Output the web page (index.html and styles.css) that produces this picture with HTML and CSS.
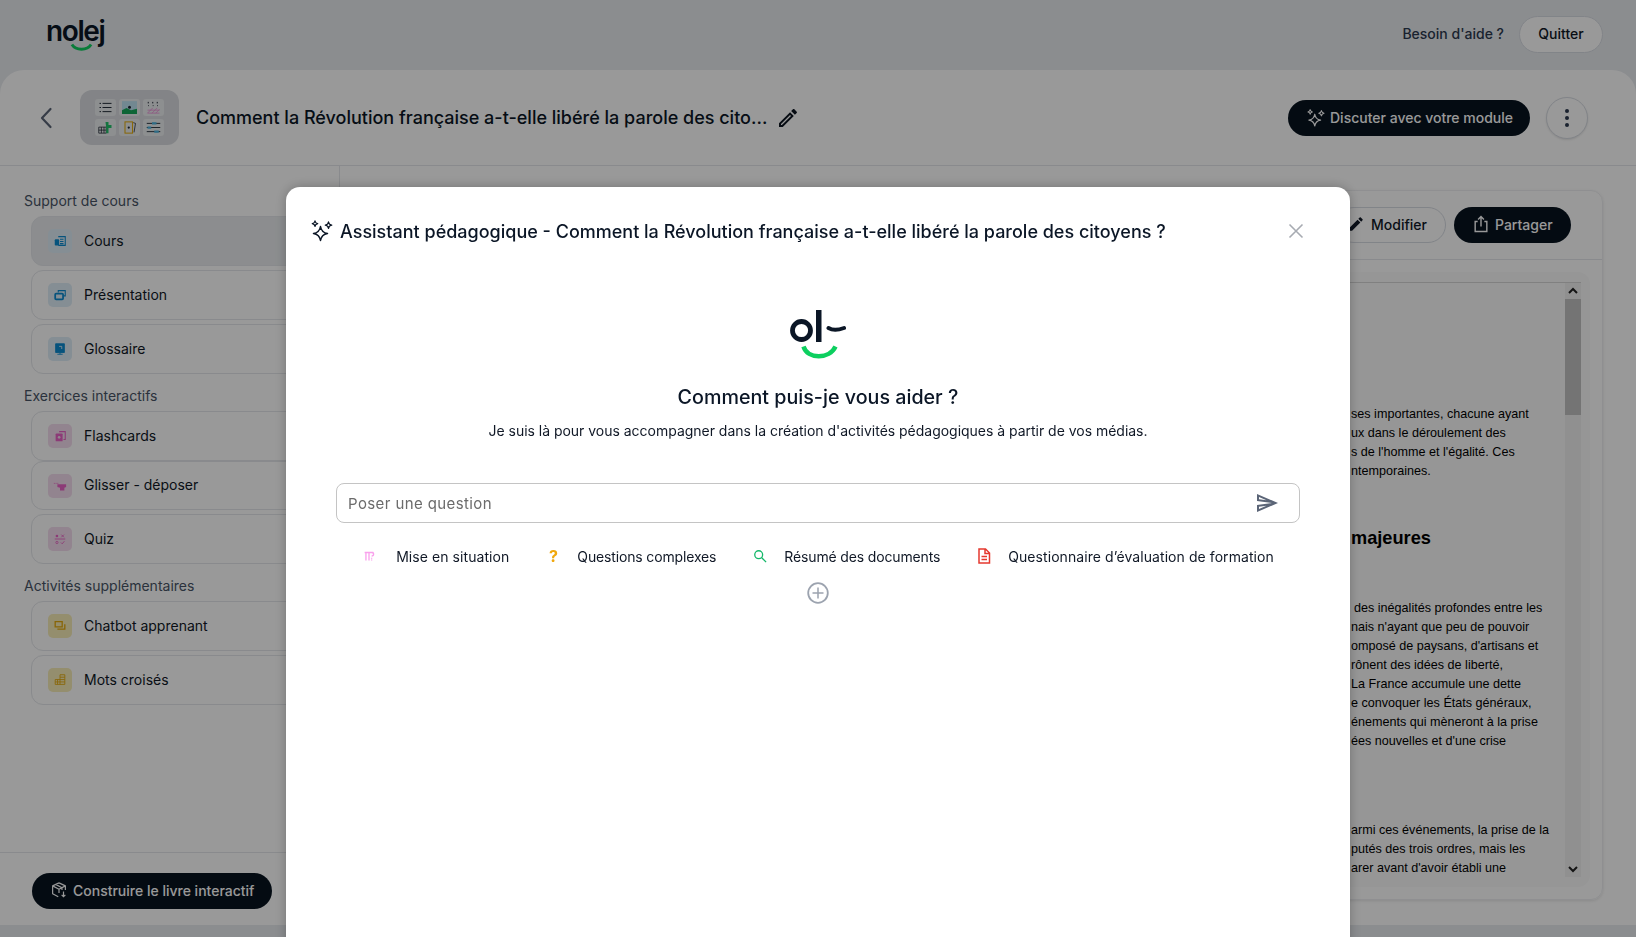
FILE: index.html
```html
<!DOCTYPE html>
<html lang="fr">
<head>
    <meta charset="UTF-8">
    <title>Nolej</title>
    <link rel="stylesheet" href="styles.css">
</head>
<body>
    <svg class="defs" width="0" height="0">
        <symbol id="sparkle" viewBox="0 0 24 24">
            <path d="M10.500 7.500C11.200 12 13 13.800 17.500 14.500 13 15.200 11.200 17 10.500 21.500 9.800 17 8 15.200 3.500 14.500 8 13.800 9.800 12 10.500 7.500Z" fill="none" stroke="currentColor" stroke-width="1.500" stroke-linejoin="round"/>
            <path d="M5 2C5.300 3.700 6 4.400 7.700 4.700 6 5 5.300 5.700 5 7.400 4.700 5.700 4 5 2.300 4.700 4 4.400 4.700 3.700 5 2Z" fill="none" stroke="currentColor" stroke-width="1.300" stroke-linejoin="round"/>
            <path d="M18.500 3C18.800 5 19.700 5.900 21.700 6.200 19.700 6.500 18.800 7.400 18.500 9.400 18.200 7.400 17.300 6.500 15.300 6.200 17.300 5.900 18.200 5 18.500 3Z" fill="none" stroke="currentColor" stroke-width="1.300" stroke-linejoin="round"/>
        </symbol>
    </svg>

    <div class="topbar">
        <div class="logo">
            <span class="logo-text">nolej</span>
            <svg class="logo-smile" viewBox="0 0 24 8"><path d="M2 1.500C6 8 18 8 22 1.500" fill="none" stroke="#10cf60" stroke-width="3"/></svg>
        </div>
        <div class="topbar-right">
            <span class="help">Besoin d'aide ?</span>
            <button class="btn-outline btn-quit">Quitter</button>
        </div>
    </div>

    <div class="card">
        <div class="card-header">
            <svg class="back" viewBox="0 0 14 22"><path d="M11.500 2 3 11l8.500 9" fill="none" stroke="#5b6577" stroke-width="2.200" stroke-linecap="round" stroke-linejoin="round"/></svg>
            <div class="thumb">
                <span class="thumb-tile"><svg viewBox="0 0 20 17"><path d="M2 3h2M6 3h12M2 8.500h2M6 8.500h12M2 14h2M6 14h12" stroke="#1d2733" stroke-width="1.300"/></svg></span>
                <span class="thumb-tile"><svg viewBox="0 0 20 17"><rect x="0" y="0" width="20" height="17" fill="#bfe3f2"/><path d="M0 17v-5l6-3 6 3 8-2v7z" fill="#17a85a"/><circle cx="10" cy="8" r="2" fill="#1d2733"/></svg></span>
                <span class="thumb-tile"><svg viewBox="0 0 20 17"><path d="M3 1v2M9 1v2M15 1v2M3 6h1M9 6h1M15 6h1" stroke="#1d2733" stroke-width="1.300"/><path d="M2 16 9 9M8 16l7-7M13 16l5-5M2 12h16M2 16h16" stroke="#ee8ad6" stroke-width="1"/></svg></span>
                <span class="thumb-tile"><svg viewBox="0 0 20 17"><path d="M1 8h10v8H1zM4.500 8v8M8 8v8M1 12h10" fill="none" stroke="#1d2733" stroke-width="1"/><path d="M10 1h4v4h4v4h-4v7h-3v-7" fill="#23c46c"/></svg></span>
                <span class="thumb-tile"><svg viewBox="0 0 20 17"><rect x="4" y="1" width="10" height="15" fill="none" stroke="#e3ad10" stroke-width="1.400"/><path d="M15 2l3 1-2 12" fill="none" stroke="#1d2733"/><circle cx="9" cy="8.500" r="1.500" fill="#1d2733"/></svg></span>
                <span class="thumb-tile"><svg viewBox="0 0 20 17"><path d="M1 3h18M1 8.500h18M1 14h18" stroke="#1d2733" stroke-width="1.200"/><path d="M8 1.500h6v3H8zM2 7h5v3H2zM11 12.500h6v3h-6z" fill="#4db4df"/></svg></span>
            </div>
            <h1 class="title">Comment la Révolution française a-t-elle libéré la parole des cito...</h1>
            <svg class="title-edit" viewBox="0 0 24 24"><path fill="#0d1520" d="M14.060 9l.940.940L5.920 19H5v-.920L14.060 9m3.600-6c-.250 0-.510.100-.700.290l-1.830 1.830 3.750 3.750 1.830-1.830c.390-.390.390-1.040 0-1.410l-2.340-2.340c-.200-.200-.450-.290-.710-.290m-3.600 3.190L3 17.250V21h3.750L17.810 9.940l-3.750-3.750z"/></svg>
            <button class="btn-dark btn-chat"><svg class="ico-20"><use href="#sparkle"/></svg>Discuter avec votre module</button>
            <button class="btn-more"><span></span><span></span><span></span></button>
        </div>

        <div class="main">
            <div class="sidebar">
                <div class="nav">
                    <div class="nav-label">Support de cours</div>
                    <div class="nav-list">
                        <div class="nav-item active">
                            <span class="tile blue"><svg viewBox="0 0 16 16"><path d="M6 3h8v10H6M8 6h4M8 8.500h4M8 11h4" fill="none" stroke="currentColor" stroke-width="1.200"/><rect x="2" y="6" width="5" height="7" rx="1" fill="currentColor"/></svg></span>
                            Cours
                        </div>
                        <div class="nav-item">
                            <span class="tile blue"><svg viewBox="0 0 16 16"><path d="M6 5V3h8v6h-2" fill="none" stroke="currentColor" stroke-width="1.200"/><rect x="2.500" y="6.500" width="9" height="6.500" rx="1" fill="none" stroke="currentColor" stroke-width="2"/></svg></span>
                            Présentation
                        </div>
                        <div class="nav-item">
                            <span class="tile blue"><svg viewBox="0 0 16 16"><path d="M3 2h10v10H3zM8 12v2M5 14h6" fill="currentColor" stroke="currentColor"/><path d="M7 5h3v3" fill="none" stroke="#deedf7"/></svg></span>
                            Glossaire
                        </div>
                    </div>
                </div>

                <div class="nav">
                    <div class="nav-label">Exercices interactifs</div>
                    <div class="nav-list">
                        <div class="nav-item joined">
                            <span class="tile pink"><svg viewBox="0 0 16 16"><path d="M7 3h7v9h-2" fill="none" stroke="currentColor" stroke-width="1.200"/><rect x="3" y="5" width="8" height="9" rx="1" fill="currentColor"/><circle cx="7" cy="9.500" r="1.500" fill="#f4dcee"/></svg></span>
                            Flashcards
                        </div>
                        <div class="nav-item short">
                            <span class="tile pink"><svg viewBox="0 0 16 16"><path d="M1 5h5" stroke="currentColor" stroke-dasharray="1 1"/><path d="M5 6h10v3l-2 1v3H8v-3L5 9z" fill="currentColor"/></svg></span>
                            Glisser - déposer
                        </div>
                        <div class="nav-item">
                            <span class="tile pink"><svg viewBox="0 0 16 16"><path d="M2 8h12" stroke="currentColor"/><path d="M9.500 3l3 3M12.500 3l-3 3M9 12l1.500 1.500L13 10.500" fill="none" stroke="currentColor"/><circle cx="4.500" cy="4.500" r="1.500" fill="currentColor"/><circle cx="4.500" cy="12" r="1.300" fill="none" stroke="currentColor"/></svg></span>
                            Quiz
                        </div>
                    </div>
                </div>

                <div class="nav">
                    <div class="nav-label">Activités supplémentaires</div>
                    <div class="nav-list">
                        <div class="nav-item">
                            <span class="tile yellow"><svg viewBox="0 0 16 16"><path d="M2.500 3h8v6h-8zM5 11.500h8.500V6" fill="none" stroke="currentColor" stroke-width="1.500"/></svg></span>
                            Chatbot apprenant
                        </div>
                        <div class="nav-item">
                            <span class="tile yellow"><svg viewBox="0 0 16 16"><path d="M8 2h5.500v11H8zM2.500 7.500H13.500M2.500 7.500V13H8M5.200 7.500V13M8 4.800h5.500M2.500 10.200h11" fill="none" stroke="currentColor" stroke-width="1"/></svg></span>
                            Mots croisés
                        </div>
                    </div>
                </div>

                <div class="sidebar-footer">
                    <button class="btn-dark btn-book">
                        <svg class="ico-18" viewBox="0 0 24 24"><path d="M12 2.500 3.500 6.500v10.500L11 21M12 2.500l8.500 4V12M3.500 6.500 12 11l8.500-4.500M12 11v5M7.500 4.500l8.500 4.500v3" fill="none" stroke="currentColor" stroke-width="1.600" stroke-linejoin="round"/><path d="M18 14v7M15.500 18.500 18 21l2.500-2.500" fill="none" stroke="currentColor" stroke-width="1.600"/></svg>
                        Construire le livre interactif
                    </button>
                </div>
            </div>

            <div class="content">
                <div class="panel">
                    <div class="panel-header">
                        <button class="btn-outline btn-edit"><svg class="ico-18" viewBox="0 0 24 24"><path fill="currentColor" d="M20.710 7.040c.390-.390.390-1.040 0-1.410l-2.340-2.340c-.370-.390-1.020-.390-1.410 0l-1.840 1.830 3.750 3.750M3 17.250V21h3.750L17.810 9.930l-3.750-3.750L3 17.250z"/></svg>Modifier</button>
                        <button class="btn-dark btn-share"><svg class="ico-20" viewBox="0 0 24 24"><path d="M8 9H5v12h14V9h-3M12 15V3M8.500 6.500 12 3l3.500 3.500" fill="none" stroke="currentColor" stroke-width="1.700"/></svg>Partager</button>
                    </div>
                    <div class="panel-body">
                        <div class="doc">
                            <div class="doc-text">
                                <p class="doc-first">ses importantes, chacune ayant<br>ux dans le déroulement des<br>s de l'homme et l'égalité. Ces<br>ntemporaines.</p>
                                <h2 class="doc-heading">majeures</h2>
                                <p class="doc-second"><span class="doc-nudge">des inégalités profondes entre les</span><br>nais n'ayant que peu de pouvoir<br>omposé de paysans, d'artisans et<br>rônent des idées de liberté,<br>La France accumule une dette<br>e convoquer les États généraux,<br>énements qui mèneront à la prise<br>ées nouvelles et d'une crise</p>
                                <p class="doc-third">armi ces événements, la prise de la<br>putés des trois ordres, mais les<br>arer avant d'avoir établi une</p>
                            </div>
                            <div class="scrollbar">
                                <svg class="scroll-arrow" viewBox="0 0 16 16"><path d="M4 10l4-4 4 4" fill="none" stroke="#222" stroke-width="2"/></svg>
                                <div class="scroll-thumb"></div>
                                <svg class="scroll-arrow scroll-down" viewBox="0 0 16 16"><path d="M4 6l4 4 4-4" fill="none" stroke="#222" stroke-width="2"/></svg>
                            </div>
                        </div>
                    </div>
                </div>
            </div>
        </div>
    </div>

    <div class="overlay"></div>

    <div class="modal">
        <div class="modal-header">
            <svg class="modal-spark"><use href="#sparkle"/></svg>
            <h2 class="modal-title">Assistant pédagogique - Comment la Révolution française a-t-elle libéré la parole des citoyens ?</h2>
            <svg class="modal-close" viewBox="0 0 16 16"><path d="M1.500 1.500l13 13M14.500 1.500l-13 13" stroke="#a7abb2" stroke-width="1.600"/></svg>
        </div>

        <svg class="bot-logo" viewBox="0 0 56 50">
            <circle cx="11.500" cy="20.500" r="9" fill="none" stroke="#0b1626" stroke-width="4.800"/>
            <rect x="26" y="0" width="5.500" height="32" fill="#0b1626"/>
            <path d="M38.500 18c4 2.500 8 2.800 15.500 0" fill="none" stroke="#0b1626" stroke-width="4" stroke-linecap="round"/>
            <path d="M13.500 36.500c4 13 26 13 32 0" fill="none" stroke="#0ccf5f" stroke-width="4.500"/>
        </svg>
        <h3 class="bot-title">Comment puis-je vous aider ?</h3>
        <p class="bot-sub">Je suis là pour vous accompagner dans la création d'activités pédagogiques à partir de vos médias.</p>

        <div class="ask">
            <span class="ask-text">Poser une question</span>
            <svg class="ask-send" viewBox="0 0 24 24"><path fill="#5b6577" d="M4.010 6.030l7.510 3.220-7.520-1 .010-2.220m7.500 8.720L4 17.970v-2.220l7.510-1M2.010 3L2 10l15 2-15 2 .010 7L23 12 2.010 3z"/></svg>
        </div>

        <div class="prompts">
            <div class="prompt">
                <svg class="prompt-ico prompt-ico-mise" viewBox="0 0 16 16"><path d="M3 4h10M4.500 4v9M8 4v9M11 4c3 0 3 4 0 4M11 10v1M11 12v1" fill="none" stroke="#f9a0ec" stroke-width="1.500"/></svg>
                <span>Mise en situation</span>
            </div>
            <div class="prompt tight">
                <span class="prompt-q">?</span>
                <span>Questions complexes</span>
            </div>
            <div class="prompt tight">
                <svg class="prompt-ico" viewBox="0 0 16 16"><circle cx="6.500" cy="6.500" r="4.500" fill="none" stroke="#15b86a" stroke-width="1.500"/><path d="M10 10l5 5" stroke="#15b86a" stroke-width="1.500"/></svg>
                <span>Résumé des documents</span>
            </div>
            <div class="prompt">
                <svg class="prompt-ico prompt-ico-doc" viewBox="0 0 16 16"><path d="M3 1h6.500L13.500 5v10H3zM9 1V5.500h4.500" fill="none" stroke="#e5392f" stroke-width="1.500"/><path d="M5.500 8.500h5.500M5.500 11.500h5.500" stroke="#e5392f" stroke-width="1.500"/></svg>
                <span>Questionnaire d’évaluation de formation</span>
            </div>
        </div>

        <svg class="more-prompts" viewBox="0 0 22 22"><circle cx="11" cy="11" r="9.800" fill="none" stroke="#9ca3af" stroke-width="1.800"/><path d="M11 5.500v11M5.500 11h11" stroke="#9ca3af" stroke-width="1.500"/></svg>
    </div>
</body>
</html>
```

FILE: styles.css
```css
* {
    box-sizing: border-box;
}

body {
    margin: 0;
    height: 937px;
    overflow: hidden;
    background-color: #e8ebef;
    font-family: 'Inter', sans-serif;
    color: #101826;
    font-size: 14px;
}

button {
    font-family: inherit;
    cursor: pointer;
}

h1, h2, h3, p {
    margin: 0;
}

.defs {
    position: absolute;
}

/* Top bar */
.topbar {
    height: 70px;
    display: flex;
    align-items: center;
    justify-content: space-between;
    padding: 0 33px 1px 46px;
}

.logo {
    position: relative;
    height: 34px;
    width: 58px;
    margin-top: -1px;
}

.logo-text {
    display: block;
    font-size: 28px;
    line-height: 28px;
    font-weight: 600;
    letter-spacing: -1.4px;
    color: #0b1626;
}

.logo-smile {
    position: absolute;
    left: 24px;
    top: 26px;
    width: 23px;
    height: 8px;
}

.topbar-right {
    display: flex;
    align-items: center;
    gap: 15px;
}

.help {
    font-weight: 500;
    color: #2c3a4f;
    margin-bottom: 3px;
}

.btn-outline {
    background: #ffffff;
    border: 1px solid #d8dce3;
    border-radius: 20px;
    color: #101826;
    font-size: 14px;
    font-weight: 500;
    display: flex;
    align-items: center;
    padding: 0 0 2px;
}

.btn-dark {
    background: #07131f;
    border: none;
    border-radius: 20px;
    color: #ffffff;
    font-size: 14px;
    font-weight: 500;
    display: flex;
    align-items: center;
    padding: 0 0 2px;
}

.btn-quit {
    width: 84px;
    height: 37px;
    justify-content: center;
}

/* Main card */
.card {
    height: 855px;
    background: #ffffff;
    border-radius: 24px 24px 0 0;
    display: flex;
    flex-direction: column;
}

.card-header {
    height: 96px;
    flex: none;
    display: flex;
    align-items: center;
    border-bottom: 1px solid #e5e7eb;
    padding: 0 48px 0 39px;
}

.back {
    width: 14px;
    height: 22px;
    flex: none;
}

.thumb {
    width: 99px;
    height: 55px;
    margin-left: 27px;
    background: #dadde1;
    border-radius: 12px;
    display: grid;
    grid-template-columns: repeat(3, 21px);
    grid-template-rows: repeat(2, 17px);
    gap: 3px;
    justify-content: center;
    align-content: center;
}

.thumb-tile {
    background: #eceef0;
    border-radius: 3px;
    display: block;
    padding: 2px 3px;
}

.thumb-tile svg {
    display: block;
    width: 100%;
    height: 100%;
}

.title {
    font-size: 18px;
    font-weight: 500;
    margin-left: 17px;
    white-space: nowrap;
    color: #0b1626;
}

.title-edit {
    width: 24px;
    height: 24px;
    margin-left: 9px;
}

.ico-18 {
    width: 18px;
    height: 18px;
    flex: none;
}

.ico-20 {
    width: 20px;
    height: 20px;
    flex: none;
}

.btn-chat {
    margin-left: auto;
    height: 36px;
    width: 242px;
    padding: 0 0 0 18px;
    gap: 4px;
    white-space: nowrap;
}

.btn-more {
    width: 42px;
    height: 42px;
    margin-left: 16px;
    border-radius: 50%;
    background: #ffffff;
    border: 1px solid #d8dce3;
    box-shadow: 0 1px 2px rgba(0, 0, 0, 0.1);
    display: flex;
    flex-direction: column;
    align-items: center;
    justify-content: center;
    gap: 3px;
}

.btn-more span {
    width: 4px;
    height: 4px;
    border-radius: 50%;
    background: #2c3a4f;
}

.main {
    flex: 1;
    display: flex;
    min-height: 0;
}

/* Sidebar */
.sidebar {
    width: 340px;
    flex: none;
    border-right: 1px solid #e5e7eb;
    padding-top: 25px;
    display: flex;
    flex-direction: column;
}

.nav {
    padding: 0 7px 12px 24px;
}

.nav-label {
    height: 20px;
    line-height: 20px;
    color: #485466;
    margin-bottom: 5px;
}

.nav-list {
    margin-left: 7px;
    display: flex;
    flex-direction: column;
    gap: 4px;
}

.nav-item {
    height: 50px;
    border: 1px solid #e5e7eb;
    border-radius: 12px;
    display: flex;
    align-items: center;
    padding: 0 0 2px 16px;
    gap: 12px;
    font-size: 14px;
    color: #101826;
}

.nav-item.active {
    background: #e9ecef;
}

.nav-item.joined {
    margin-bottom: -4px;
}

.nav-item.short {
    height: 49px;
}

.tile {
    width: 24px;
    height: 24px;
    margin-top: 2px;
    border-radius: 5px;
    display: flex;
    align-items: center;
    justify-content: center;
}

.tile svg {
    width: 14px;
    height: 14px;
}

.blue {
    background: #deedf7;
    color: #0a8ad0;
}

.pink {
    background: #f4dcee;
    color: #ea62c6;
}

.yellow {
    background: #f7edb8;
    color: #e3a90b;
}

.sidebar-footer {
    margin-top: auto;
    height: 73px;
    border-top: 1px solid #e5e7eb;
    padding: 20px 0 0 32px;
}

.btn-book {
    width: 240px;
    height: 36px;
    padding-left: 18px;
    gap: 5px;
    white-space: nowrap;
}

/* Right panel */
.content {
    flex: 1;
    padding: 24px 33px 25px 24px;
    min-width: 0;
}

.panel {
    height: 100%;
    border: 1px solid #eeeff2;
    border-radius: 12px;
    box-shadow: 0 1px 3px rgba(0, 0, 0, 0.1);
    display: flex;
    flex-direction: column;
}

.panel-header {
    height: 69px;
    flex: none;
    display: flex;
    align-items: center;
    justify-content: flex-end;
    gap: 8px;
    padding-right: 31px;
    border-bottom: 1px solid #e5e7eb;
}

.btn-edit {
    width: 110px;
    height: 36px;
    justify-content: flex-end;
    gap: 6px;
    padding-right: 18px;
}

.btn-share {
    width: 117px;
    height: 36px;
    gap: 4px;
    padding-left: 17px;
}

.panel-body {
    flex: 1;
    margin: 12px;
    padding: 10px 9px;
    background: #fbfbfb;
    border-radius: 12px;
    min-height: 0;
}

.doc {
    height: 100%;
    display: flex;
    border-top: 1px solid #d6d6d6;
}

.doc-text {
    flex: 1;
    padding: 122px 0 0 965px;
    font-family: 'Liberation Sans', Arial, sans-serif;
    font-size: 12.6px;
    line-height: 19px;
    color: #000000;
    white-space: nowrap;
    overflow: hidden;
}

.doc-heading {
    font-size: 18.2px;
    line-height: 24px;
    font-weight: 700;
    margin-top: 45px;
}

.doc-second {
    margin-top: 49px;
}

.doc-nudge {
    margin-left: 3px;
}

.doc-third {
    margin-top: 70px;
}

.scrollbar {
    width: 16px;
    flex: none;
    background: #f1f1f1;
    display: flex;
    flex-direction: column;
}

.scroll-arrow {
    width: 16px;
    height: 16px;
    flex: none;
}

.scroll-down {
    margin-top: auto;
}

.scroll-thumb {
    height: 116px;
    background: #c1c1c1;
}

/* Modal */
.overlay {
    position: fixed;
    inset: 0;
    background: rgba(0, 0, 0, 0.4);
}

.modal {
    position: fixed;
    top: 187px;
    left: 286px;
    width: 1064px;
    height: 800px;
    background: #ffffff;
    border-radius: 14px;
    box-shadow: 0 0 12px rgba(0, 0, 0, 0.25);
    display: flex;
    flex-direction: column;
    align-items: center;
}

.modal-header {
    align-self: stretch;
    height: 88px;
    flex: none;
    display: flex;
    align-items: center;
    padding: 0 46px 0 24px;
}

.modal-spark {
    width: 24px;
    height: 24px;
    flex: none;
    color: #0b1626;
}

.modal-title {
    font-size: 18px;
    font-weight: 500;
    margin-left: 6px;
    white-space: nowrap;
    color: #0b1626;
}

.modal-close {
    width: 16px;
    height: 16px;
    margin-left: auto;
}

.bot-logo {
    width: 56px;
    height: 50px;
    margin-top: 35px;
    flex: none;
}

.bot-title {
    margin-top: 23px;
    font-size: 19.7px;
    line-height: 28px;
    font-weight: 500;
    color: #0b1626;
}

.bot-sub {
    margin-top: 10px;
    line-height: 20px;
    letter-spacing: -0.02px;
    color: #101826;
}

.ask {
    width: 964px;
    height: 40px;
    margin-top: 42px;
    flex: none;
    border: 1px solid #c4c4c4;
    border-radius: 8px;
    display: flex;
    align-items: center;
    justify-content: space-between;
    padding: 0 20px 0 11px;
}

.ask-text {
    font-size: 15px;
    letter-spacing: 0.4px;
    color: #6b6b6b;
}

.ask-send {
    width: 24px;
    height: 24px;
}

.prompts {
    margin-top: 22px;
    display: flex;
    gap: 37px;
    height: 22px;
    align-items: center;
}

.prompt {
    display: flex;
    align-items: center;
    gap: 17px;
    color: #101826;
    white-space: nowrap;
    letter-spacing: 0.07px;
}

.prompt.tight {
    letter-spacing: -0.15px;
}

.prompt-ico {
    width: 14px;
    height: 14px;
    flex: none;
}

.prompt-ico-mise {
    margin-right: 3px;
}

.prompt-ico-doc {
    width: 16px;
    height: 16px;
    margin: 0 -1px;
}

.prompt-q {
    width: 14px;
    font-size: 16px;
    font-weight: 700;
    color: #f0a80e;
    text-align: center;
}

.more-prompts {
    width: 22px;
    height: 22px;
    margin-top: 15px;
    flex: none;
}
```
